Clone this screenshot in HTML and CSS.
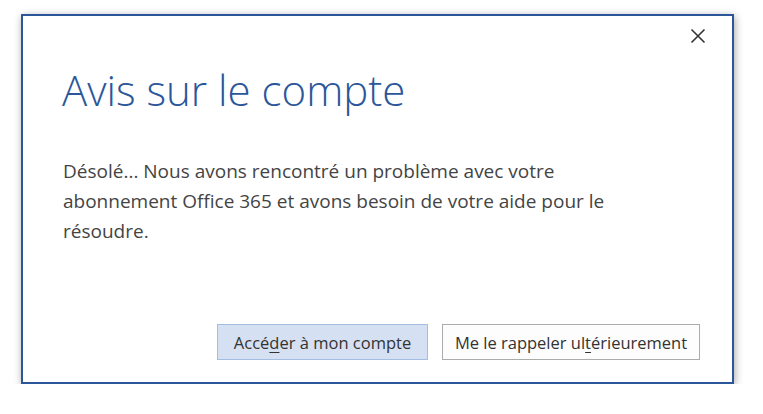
FILE: index.html
```html
<!DOCTYPE html>
<html lang="fr">
<head>
<meta charset="utf-8">
<title>Avis sur le compte</title>
<link rel="stylesheet" href="styles.css">
</head>
<body>
<div class="dialog">
  <div class="topbar">
    <button class="close" aria-label="Fermer">
      <svg width="16" height="16" viewBox="0 0 16 16"><path d="M1.5 1.5 L14.5 14.5 M14.5 1.5 L1.5 14.5" stroke="#333" stroke-width="1.6" fill="none"/></svg>
    </button>
  </div>
  <h1 class="title">Avis sur le compte</h1>
  <p class="message">Désolé... Nous avons rencontré un problème avec votre<br>abonnement Office 365 et avons besoin de votre aide pour le<br>résoudre.</p>
  <div class="actions">
    <button class="btn primary">Accé<u>d</u>er à mon compte</button>
    <button class="btn">Me le rappeler ul<u>t</u>érieurement</button>
  </div>
</div>
</body>
</html>
```
FILE: styles.css
```css
html, body {
  margin: 0;
  padding: 0;
  background: #ffffff;
}
body {
  padding: 14px 0 0 21px;
  font-family: "Open Sans", "Noto Sans", sans-serif;
}
.dialog {
  box-sizing: border-box;
  width: 713px;
  height: 370px;
  border: 2px solid #2b579a;
  background: #ffffff;
  box-shadow: 1px 2px 8px rgba(0, 0, 0, 0.35);
  display: flex;
  flex-direction: column;
  padding: 0 32px 22px 40px;
}
.topbar {
  display: flex;
  justify-content: flex-end;
  padding-top: 12px;
  margin-right: -6px;
  height: 20px;
}
.close {
  border: 0;
  background: transparent;
  padding: 0;
  width: 16px;
  height: 16px;
  display: flex;
}
.title {
  margin: 17px 0 0 -1px;
  font-weight: 300;
  font-size: 42px;
  line-height: 50px;
  color: #2b579a;
}
.message {
  margin: 41px 0 0 0;
  font-size: 19px;
  line-height: 30px;
  color: #444444;
}
.actions {
  margin-top: auto;
  display: flex;
  justify-content: flex-end;
  gap: 14px;
}
.btn {
  box-sizing: border-box;
  height: 36px;
  padding: 0 10px;
  font-family: "Open Sans", "Noto Sans", sans-serif;
  font-size: 16.5px;
  color: #333333;
  background: #fdfdfd;
  border: 1px solid #ababab;
}
.btn.primary {
  width: 211px;
  background: #d5e1f2;
  border-color: #a3bde3;
}
.btn:not(.primary) {
  width: 258px;
}
.btn u {
  text-underline-offset: 3px;
}
```
